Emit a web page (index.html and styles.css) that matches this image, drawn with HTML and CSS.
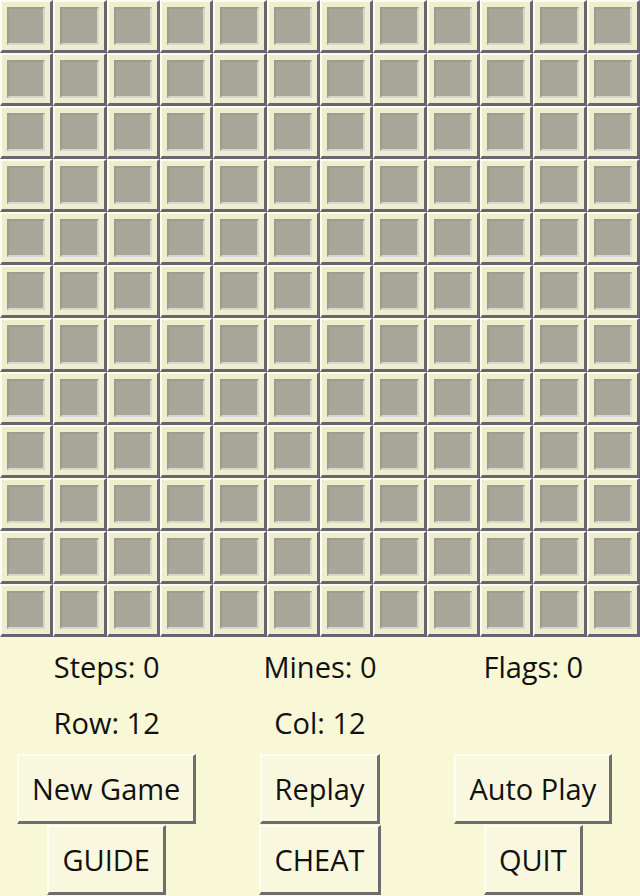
FILE: index.html
```html
<!DOCTYPE html>
<html>
<head>
<meta charset="utf-8">
<title>Minesweeper</title>
<link rel="stylesheet" href="styles.css">
</head>
<body>
<div class="board">
<span class="cell"></span><span class="cell"></span><span class="cell"></span><span class="cell"></span><span class="cell"></span><span class="cell"></span><span class="cell"></span><span class="cell"></span><span class="cell"></span><span class="cell"></span><span class="cell"></span><span class="cell"></span>
<span class="cell"></span><span class="cell"></span><span class="cell"></span><span class="cell"></span><span class="cell"></span><span class="cell"></span><span class="cell"></span><span class="cell"></span><span class="cell"></span><span class="cell"></span><span class="cell"></span><span class="cell"></span>
<span class="cell"></span><span class="cell"></span><span class="cell"></span><span class="cell"></span><span class="cell"></span><span class="cell"></span><span class="cell"></span><span class="cell"></span><span class="cell"></span><span class="cell"></span><span class="cell"></span><span class="cell"></span>
<span class="cell"></span><span class="cell"></span><span class="cell"></span><span class="cell"></span><span class="cell"></span><span class="cell"></span><span class="cell"></span><span class="cell"></span><span class="cell"></span><span class="cell"></span><span class="cell"></span><span class="cell"></span>
<span class="cell"></span><span class="cell"></span><span class="cell"></span><span class="cell"></span><span class="cell"></span><span class="cell"></span><span class="cell"></span><span class="cell"></span><span class="cell"></span><span class="cell"></span><span class="cell"></span><span class="cell"></span>
<span class="cell"></span><span class="cell"></span><span class="cell"></span><span class="cell"></span><span class="cell"></span><span class="cell"></span><span class="cell"></span><span class="cell"></span><span class="cell"></span><span class="cell"></span><span class="cell"></span><span class="cell"></span>
<span class="cell"></span><span class="cell"></span><span class="cell"></span><span class="cell"></span><span class="cell"></span><span class="cell"></span><span class="cell"></span><span class="cell"></span><span class="cell"></span><span class="cell"></span><span class="cell"></span><span class="cell"></span>
<span class="cell"></span><span class="cell"></span><span class="cell"></span><span class="cell"></span><span class="cell"></span><span class="cell"></span><span class="cell"></span><span class="cell"></span><span class="cell"></span><span class="cell"></span><span class="cell"></span><span class="cell"></span>
<span class="cell"></span><span class="cell"></span><span class="cell"></span><span class="cell"></span><span class="cell"></span><span class="cell"></span><span class="cell"></span><span class="cell"></span><span class="cell"></span><span class="cell"></span><span class="cell"></span><span class="cell"></span>
<span class="cell"></span><span class="cell"></span><span class="cell"></span><span class="cell"></span><span class="cell"></span><span class="cell"></span><span class="cell"></span><span class="cell"></span><span class="cell"></span><span class="cell"></span><span class="cell"></span><span class="cell"></span>
<span class="cell"></span><span class="cell"></span><span class="cell"></span><span class="cell"></span><span class="cell"></span><span class="cell"></span><span class="cell"></span><span class="cell"></span><span class="cell"></span><span class="cell"></span><span class="cell"></span><span class="cell"></span>
<span class="cell"></span><span class="cell"></span><span class="cell"></span><span class="cell"></span><span class="cell"></span><span class="cell"></span><span class="cell"></span><span class="cell"></span><span class="cell"></span><span class="cell"></span><span class="cell"></span><span class="cell"></span>
</div>
<div class="panel">
  <div class="label">Steps: 0</div>
  <div class="label">Mines: 0</div>
  <div class="label">Flags: 0</div>
  <div class="label">Row: 12</div>
  <div class="label">Col: 12</div>
  <div class="label"></div>
  <div class="slot slot-top"><button class="btn">New Game</button></div>
  <div class="slot slot-top"><button class="btn">Replay</button></div>
  <div class="slot slot-top"><button class="btn">Auto Play</button></div>
  <div class="slot"><button class="btn">GUIDE</button></div>
  <div class="slot"><button class="btn">CHEAT</button></div>
  <div class="slot"><button class="btn">QUIT</button></div>
</div>
</body>
</html>
```
FILE: styles.css
```css
html, body {
  margin: 0;
  padding: 0;
  background: #f8f7d6;
  width: 640px;
  height: 896px;
  overflow: hidden;
}

body {
  font-family: "Open Sans", "Noto Sans", sans-serif;
  color: #111111;
}

.board {
  display: grid;
  grid-template-columns: repeat(12, 1fr);
  grid-auto-rows: 53.08px;
  width: 640px;
  background: #6c6c76;
}

.cell {
  display: flex;
  box-sizing: border-box;
  padding: 5px;
  background: #eeedcc;
  border-style: solid;
  border-width: 2px 3px 3px 2px;
  border-color: #fbfbef #66666f #66666f #fbfbef;
}

.cell::after {
  content: "";
  flex: 1;
  background: #a8a699;
  border: 2px solid;
  border-color: #9e9c90 #d6d6d4 #d6d6d4 #9e9c90;
}

.panel {
  display: grid;
  grid-template-columns: repeat(3, 1fr);
  grid-template-rows: 58px 55px 74px 70px;
  align-items: center;
  justify-items: center;
  padding-top: 1px;
}

.label {
  font-size: 29px;
  line-height: 34px;
}

.slot {
  align-self: start;
}

.slot-top {
  padding-top: 3px;
}

.btn {
  font-family: inherit;
  font-size: 29px;
  color: #111111;
  height: 70px;
  padding: 0 13px;
  margin: 0;
  background: #f9f8de;
  border-style: solid;
  border-width: 2px 3px 3px 2px;
  border-color: #fdfdf3 #6d6d6d #6d6d6d #fdfdf3;
  border-radius: 0;
}
```
